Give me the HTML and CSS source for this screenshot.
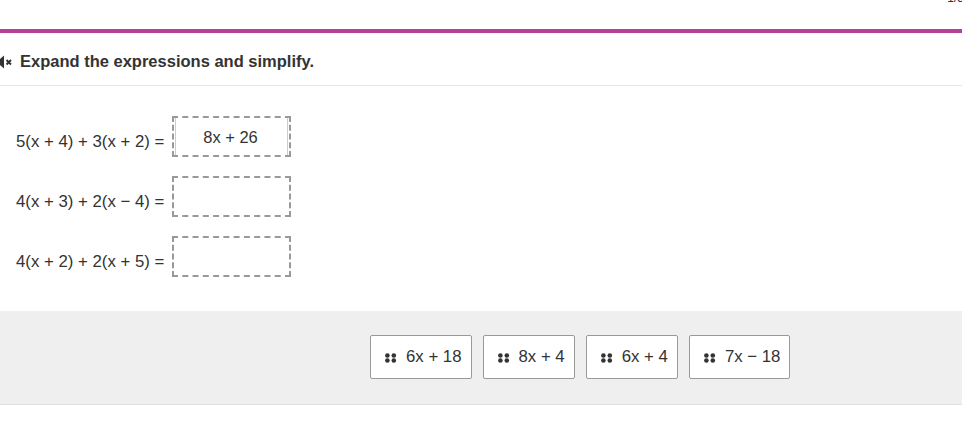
FILE: index.html
```html
<!DOCTYPE html>
<html lang="en">

<head>
    <meta charset="UTF-8">
    <meta name="viewport" content="width=device-width, initial-scale=1.0">
    <title>Expand the expressions</title>
    <link rel="stylesheet" href="styles.css">
</head>

<body>
    <div class="top-strip">
        <span class="page-count">1/3</span>
    </div>

    <div class="question-header">
        <span class="audio-icon">
            <svg width="14" height="14" viewBox="0 0 14 14">
                <path d="M-4 4 H0 L4 0.5 V13.5 L0 10 H-4 Z" fill="#333" />
                <path d="M6.5 5 L11 9.5 M11 5 L6.5 9.5" stroke="#333" stroke-width="1.9" />
            </svg>
        </span>
        <h1 class="question-title">Expand the expressions and simplify.</h1>
    </div>

    <div class="question-body">
        <div class="expr-row">
            <span class="expr">5(x + 4) + 3(x + 2) =</span>
            <div class="drop-zone">
                <div class="placed-item">8x + 26</div>
            </div>
        </div>
        <div class="expr-row">
            <span class="expr">4(x + 3) + 2(x &minus; 4) =</span>
            <div class="drop-zone"></div>
        </div>
        <div class="expr-row">
            <span class="expr">4(x + 2) + 2(x + 5) =</span>
            <div class="drop-zone"></div>
        </div>
    </div>

    <div class="answer-bank">
        <div class="tile"><svg class="grip" width="12" height="10" viewBox="0 0 12 10"><circle cx="2.4" cy="2.5" r="2.3" /><circle cx="8.8" cy="2.5" r="2.3" /><circle cx="2.4" cy="7.5" r="2.3" /><circle cx="8.8" cy="7.5" r="2.3" /></svg>6x + 18</div>
        <div class="tile"><svg class="grip" width="12" height="10" viewBox="0 0 12 10"><circle cx="2.4" cy="2.5" r="2.3" /><circle cx="8.8" cy="2.5" r="2.3" /><circle cx="2.4" cy="7.5" r="2.3" /><circle cx="8.8" cy="7.5" r="2.3" /></svg>8x + 4</div>
        <div class="tile"><svg class="grip" width="12" height="10" viewBox="0 0 12 10"><circle cx="2.4" cy="2.5" r="2.3" /><circle cx="8.8" cy="2.5" r="2.3" /><circle cx="2.4" cy="7.5" r="2.3" /><circle cx="8.8" cy="7.5" r="2.3" /></svg>6x + 4</div>
        <div class="tile"><svg class="grip" width="12" height="10" viewBox="0 0 12 10"><circle cx="2.4" cy="2.5" r="2.3" /><circle cx="8.8" cy="2.5" r="2.3" /><circle cx="2.4" cy="7.5" r="2.3" /><circle cx="8.8" cy="7.5" r="2.3" /></svg>7x &minus; 18</div>
    </div>
</body>

</html>
```

FILE: styles.css
```css
body {
    font-family: "Liberation Sans", Arial, sans-serif;
    margin: 0;
    color: #333;
    background: #fff;
}

.top-strip {
    position: relative;
    height: 29px;
    border-bottom: 4px solid #b3419a;
}

.page-count {
    position: absolute;
    right: -2px;
    top: -9px;
    font-size: 12px;
    color: #333;
}

.question-header {
    display: flex;
    align-items: center;
    height: 53px;
    padding-top: 4px;
    box-sizing: border-box;
    border-bottom: 1px solid #e6e6e6;
}

.audio-icon {
    display: flex;
    width: 20px;
    margin-top: 2px;
}

.question-title {
    margin: 0;
    font-size: 16.5px;
    font-weight: bold;
}

.question-body {
    padding: 30px 0 33px 16px;
    display: flex;
    flex-direction: column;
    gap: 19px;
}

.expr-row {
    display: flex;
    align-items: center;
    gap: 4px;
}

.expr {
    font-size: 16.8px;
    width: 152px;
    padding-top: 10px;
}

.drop-zone {
    box-sizing: border-box;
    width: 119px;
    height: 41px;
    border: 2px dashed #999;
    padding: 0 1px;
}

.placed-item {
    box-sizing: border-box;
    height: 37px;
    border-left: 1px solid #ccc;
    border-right: 1px solid #ccc;
    text-align: center;
    font-size: 16.5px;
    padding-top: 10px;
    padding-right: 2px;
}

.answer-bank {
    background: #efefef;
    border-bottom: 1px solid #e0e0e0;
    height: 93px;
    margin-top: 1px;
    display: flex;
    align-items: center;
    gap: 11px;
    padding-left: 370px;
}

.tile {
    box-sizing: border-box;
    height: 44px;
    background: #fff;
    border: 1px solid #999;
    border-radius: 2px;
    display: flex;
    align-items: center;
    padding: 0 9px 0 14px;
    font-size: 16.8px;
    margin-top: -1px;
}

.grip {
    fill: #333;
    margin-right: 9px;
    margin-top: 1px;
}
```
